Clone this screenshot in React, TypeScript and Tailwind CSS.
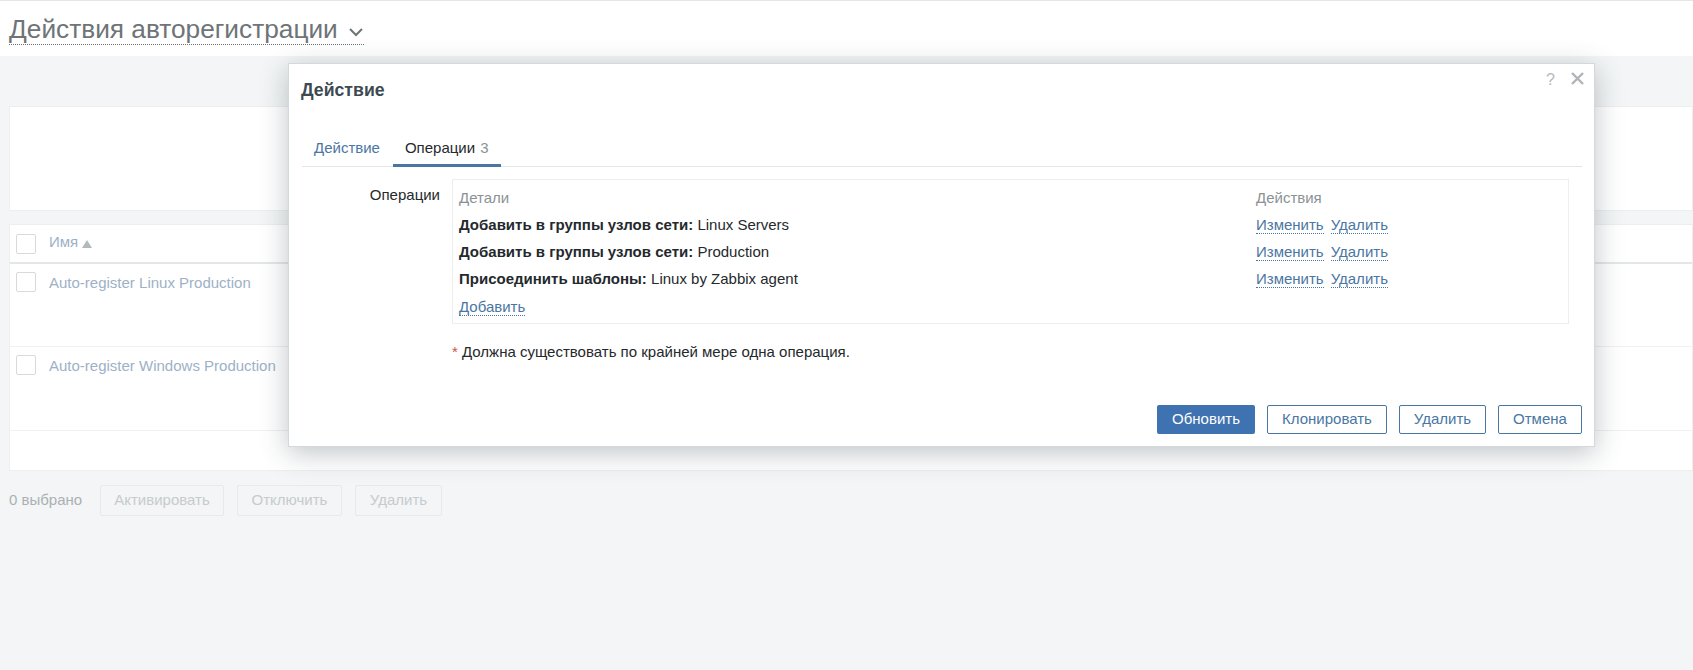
const FONT = "font-['Liberation_Sans',Arial,sans-serif]";

function Check() {
  return <span className="block w-5 h-5 rounded-[2px] border border-[#d6dadd] bg-white shrink-0" />;
}

function Ghost({ children, w }: { children: string; w: string }) {
  return (
    <span className={`${w} h-[31px] flex items-center justify-center border border-[#e7eaec] rounded-[2px] text-[#c6cbce] bg-[#f3f5f6]`}>
      {children}
    </span>
  );
}

function Dotted({ children }: { children: string }) {
  return <a className="text-[#4a76a3] border-b border-dotted border-[#4a76a3] leading-[17px]">{children}</a>;
}

function OpRow({ b, t }: { b: string; t: string }) {
  return (
    <div className="flex h-[27px] items-center">
      <div className="w-[797px] mt-[2px] text-[#24292c]">
        <b>{b}</b> {t}
      </div>
      <div className="flex gap-[7px]">
        <Dotted>Изменить</Dotted>
        <Dotted>Удалить</Dotted>
      </div>
    </div>
  );
}

function Outline({ children, w }: { children: string; w: string }) {
  return (
    <span className={`${w} h-[29px] flex items-center justify-center border border-[#4a76a3] rounded-[2px] text-[#4a76a3] bg-white`}>
      {children}
    </span>
  );
}

export default function App() {
  return (
    <div className={`${FONT} relative w-[1693px] h-[670px] overflow-hidden bg-[#f3f5f6] text-[15px]`}>
      <header className="h-[56px] bg-white border-t border-[#e4e6e8] pl-[9px] pt-[14px]">
        <h1 className="inline-flex items-center gap-[10px] text-[26.25px] leading-[29px] text-[#6e7477] border-b border-dotted border-[#6e7477]">
          Действия авторегистрации
          <svg width="16" height="10" viewBox="0 0 16 10" fill="none" className="mt-[4px]">
            <path d="M2 2l6 6 6-6" stroke="#6e7477" strokeWidth="2" />
          </svg>
        </h1>
      </header>

      <main className="pl-[9px] pt-[50px]">
        <div className="h-[105px] bg-white border border-[#eceef0]" />
        <div className="mt-[13px] h-[247px] bg-white border border-[#eceef0] text-[#9db1c7]">
          <div className="h-[39px] flex items-center pl-[6px] gap-[13px] border-b-2 border-[#e4e7e9]">
            <Check />
            <span className="flex items-center gap-[4px] -mt-[2px]">
              Имя
              <svg width="10" height="8" viewBox="0 0 10 8" className="mt-[2px]"><path d="M5 0l5 8H0z" fill="#b4b9bc" /></svg>
            </span>
          </div>
          <div className="h-[83px] flex items-start pl-[6px] pt-[8px] gap-[13px] border-b border-[#eff1f2]">
            <Check />
            <span>Auto-register Linux Production</span>
          </div>
          <div className="h-[84px] flex items-start pl-[6px] pt-[8px] gap-[13px] border-b border-[#eff1f2]">
            <Check />
            <span>Auto-register Windows Production</span>
          </div>
        </div>
      </main>

      <div className="flex items-center pl-[9px] mt-[14px] text-[#aab0b4]">
        <span className="w-[91px]">0 выбрано</span>
        <div className="flex gap-[13px]">
          <Ghost w="w-[124px]">Активировать</Ghost>
          <Ghost w="w-[105px]">Отключить</Ghost>
          <Ghost w="w-[87px]">Удалить</Ghost>
        </div>
      </div>

      <div className="absolute left-[288px] top-[63px] w-[1307px] h-[384px] bg-white border border-[#d3d8db] shadow-[0_6px_26px_rgba(55,70,80,0.32)] pl-[13px] pr-[12px] flex flex-col">
        <span className="absolute right-[39px] top-[4px] text-[#b5b9bb] text-[16px]">?</span>
        <svg width="13" height="13" viewBox="0 0 13 13" className="absolute right-[10px] top-[8px]">
          <path d="M1 1l11 11M12 1L1 12" stroke="#b0b4b7" strokeWidth="2.4" />
        </svg>
        <h2 className="mt-[16px] -ml-px text-[17.7px] leading-[20px] font-bold text-[#3d4a52]">Действие</h2>
        <nav className="mt-[29px] h-[38px] flex border-b border-[#e4e7e9] pl-[12px] gap-[25px]">
          <span className="pt-[8px] text-[#4a76a3]">Действие</span>
          <span className="relative pt-[8px] text-[#24292c] px-0">
            Операции <span className="text-[#8b9296] ml-px">3</span>
            <span className="absolute -left-[12px] -right-[12px] -bottom-px h-[3px] bg-[#4a76a3]" />
          </span>
        </nav>
        <div className="mt-[12px] flex items-start">
          <span className="w-[138px] text-right text-[#24292c] pt-[5px]">Операции</span>
          <div className="ml-[12px] w-[1117px] h-[145px] border border-[#eceef0] px-[6px] pt-[6px]">
            <div className="flex h-[25px] items-center text-[#8b9296]">
              <span className="w-[797px]">Детали</span>
              <span>Действия</span>
            </div>
            <OpRow b="Добавить в группы узлов сети:" t="Linux Servers" />
            <OpRow b="Добавить в группы узлов сети:" t="Production" />
            <OpRow b="Присоединить шаблоны:" t="Linux by Zabbix agent" />
            <div className="flex h-[30px] items-center"><Dotted>Добавить</Dotted></div>
          </div>
        </div>
        <p className="mt-[17px] ml-[150px] text-[#24292c]">
          <span className="text-[#c8563f]">*</span> Должна существовать по крайней мере одна операция.
        </p>
        <div className="mt-auto mb-[12px] flex justify-end gap-[12px]">
          <span className="w-[98px] h-[29px] flex items-center justify-center rounded-[2px] bg-[#3e72b0] text-white">Обновить</span>
          <Outline w="w-[120px]">Клонировать</Outline>
          <Outline w="w-[87px]">Удалить</Outline>
          <Outline w="w-[84px]">Отмена</Outline>
        </div>
      </div>
    </div>
  );
}
